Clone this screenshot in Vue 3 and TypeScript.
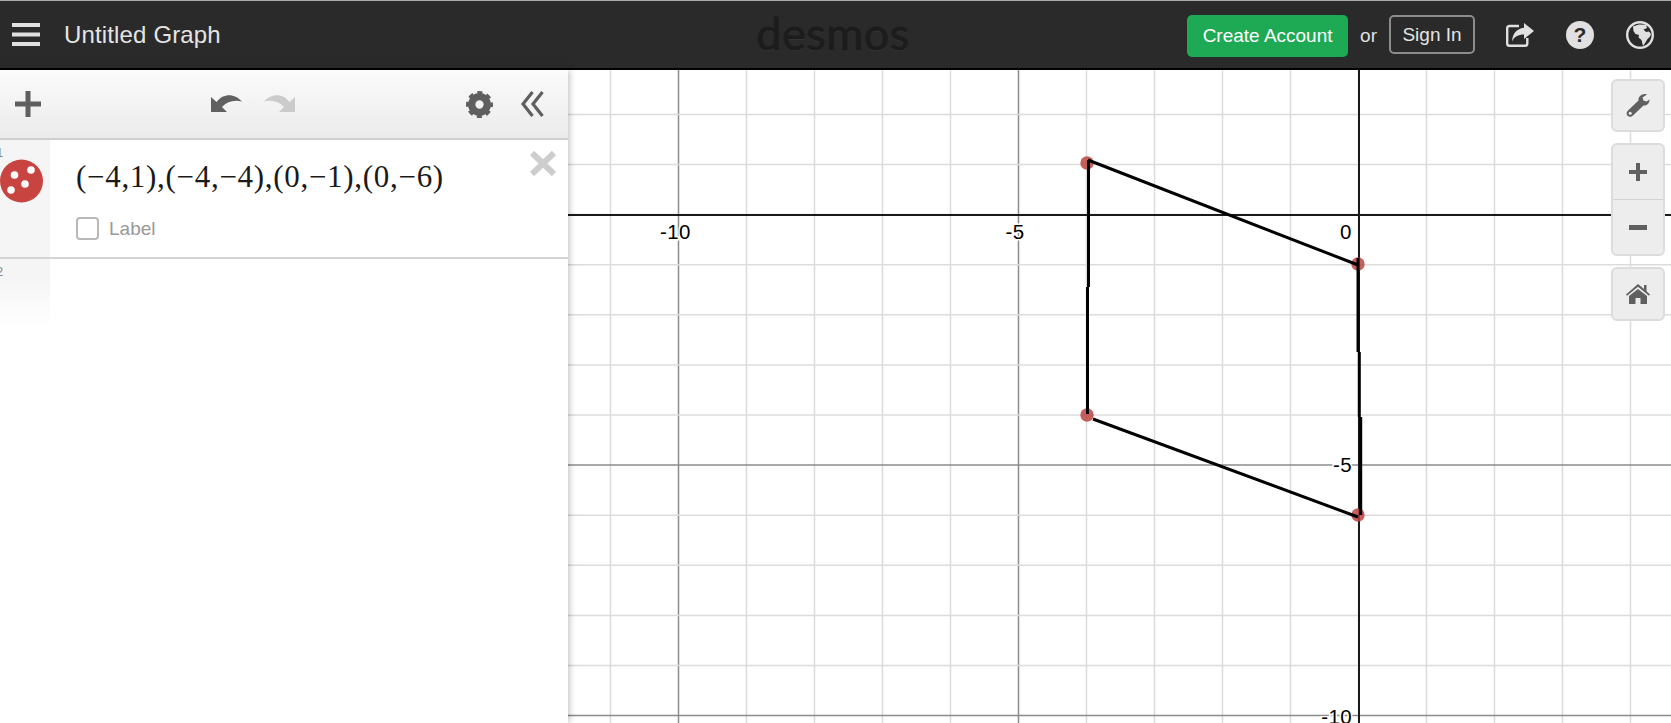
<script setup lang="ts">
const xs: number[] = [];
for (let x = 610.5; x < 1671; x += 68) xs.push(x);
const ys: number[] = [];
for (let k = -2; k <= 10; k++) ys.push(214.6 + 50.1 * k);
const majorX = new Set([678.5, 1018.5]);
const majorYIdx = new Set([7, 12]);
const xLabels = [
  { t: "-10", x: 675.5, y: 239 },
  { t: "-5", x: 1015, y: 239 },
  { t: "0", x: 1346, y: 239 },
];
const yLabels = [
  { t: "-5", x: 1352, y: 472 },
  { t: "-10", x: 1352, y: 724 },
];
const dots = [
  [1087, 163],
  [1358, 264],
  [1087, 415],
  [1358, 515],
];
</script>

<template>
  <div class="page">
    <header class="top">
      <div class="left">
        <svg class="burger" width="28" height="23" viewBox="0 0 28 23"><path d="M0 0h28v4H0zM0 9.500h28v4H0zM0 19h28v4H0z" fill="#e0e0e0"/></svg>
        <span class="title">Untitled Graph</span>
      </div>
      <div class="logo">desmos</div>
      <div class="right">
        <button class="create">Create Account</button>
        <span class="or">or</span>
        <button class="signin">Sign In</button>
        <svg class="share" width="28" height="24" viewBox="0 0 28 24">
          <path d="M13 3H3.500Q1.200 3 1.200 5.300V20.500Q1.200 22.800 3.500 22.800H19Q21.300 22.800 21.300 20.500V15" fill="none" stroke="#e0e0e0" stroke-width="2.400"/>
          <path d="M18 0L28 8L18 16V11.500C12 11.500 8.500 13.500 6 18.500C6.500 11 10.500 5.500 18 4.800Z" fill="#e0e0e0"/>
        </svg>
        <span class="help">?</span>
        <svg class="globe" width="28" height="28" viewBox="0 0 28 28">
          <circle cx="14" cy="14" r="12.800" fill="#2a2a2a" stroke="#e0e0e0" stroke-width="2.400"/>
          <path d="M7 5.500L13 3.500L20 3.800L21 7L17.500 8.500L20 11L23 10.500L25 13C24.500 15 23 17 21.500 18L18.500 23L17 25L15.500 19L12.500 16.500L13 14L9.500 13L7.500 10Z" fill="#e0e0e0"/>
        </svg>
      </div>
    </header>

    <main class="main">
      <aside class="panel">
        <div class="toolbar">
          <svg class="plus" width="26" height="26" viewBox="0 0 26 26"><path d="M10.500 0h5v10.500H26v5H15.500V26h-5V15.500H0v-5h10.500z" fill="#5f5f5f"/></svg>
          <div class="history">
            <svg width="32" height="20" viewBox="0 0 32 20"><path d="M1 4V19H17L12 14C17 8.500 24 6.500 32 8.500C25.500 1 14 -1 6.500 9Z" fill="#606060"/></svg>
            <svg width="32" height="20" viewBox="0 0 32 20"><path d="M31 4V19H15L20 14C15 8.500 8 6.500 0 8.500C6.500 1 18 -1 25.500 9Z" fill="#cbcbcb"/></svg>
          </div>
          <svg class="gear" width="27" height="27" viewBox="0 0 26 26">
            <circle cx="13" cy="13" r="7.500" fill="none" stroke="#5f5f5f" stroke-width="7"/>
            <circle cx="13" cy="13" r="11" fill="none" stroke="#5f5f5f" stroke-width="4" stroke-dasharray="4.640 4" stroke-dashoffset="2.320"/>
          </svg>
          <svg class="chev" width="23" height="26" viewBox="0 0 23 26"><path d="M11.500 1L2 13L11.500 25M21.500 1L12 13L21.500 25" fill="none" stroke="#5f5f5f" stroke-width="3.200"/></svg>
        </div>

        <div class="row first">
          <div class="gutter">
            <span class="num">1</span>
            <svg class="points" width="43" height="44" viewBox="0 0 43 44">
              <circle cx="21.500" cy="22" r="21.500" fill="#c74440"/>
              <circle cx="14.500" cy="16" r="3.800" fill="#fff"/>
              <circle cx="31" cy="11" r="3.800" fill="#fff"/>
              <circle cx="25" cy="25" r="3.800" fill="#fff"/>
              <circle cx="11" cy="31" r="3.800" fill="#fff"/>
            </svg>
          </div>
          <div class="body">
            <div class="math">(−4,1),(−4,−4),(0,−1),(0,−6)</div>
            <label class="lbl"><span class="box"></span><span>Label</span></label>
          </div>
          <svg class="close" width="28" height="27" viewBox="0 0 28 27"><path d="M3 3L25 24M25 3L3 24" stroke="#cdcdcd" stroke-width="6"/></svg>
        </div>

        <div class="row second">
          <div class="gutter fade"><span class="num">2</span></div>
        </div>
      </aside>

      <section class="graph">
        <svg class="plot" viewBox="568 70 1103 653" width="1103" height="653">
          <line v-for="x in xs" :key="'x' + x" :x1="x" :x2="x" y1="70" y2="723" :stroke="majorX.has(x) ? '#8c8c8c' : '#dcdcdc'" stroke-width="1.500"/>
          <line v-for="(y, i) in ys" :key="'y' + i" x1="568" x2="1671" :y1="y" :y2="y" :stroke="majorYIdx.has(i) ? '#8c8c8c' : '#dcdcdc'" stroke-width="1.500"/>
          <g shape-rendering="crispEdges">
            <line x1="1359" x2="1359" y1="70" y2="723" stroke="#1a1a1a" stroke-width="2"/>
            <line x1="568" x2="1671" y1="215" y2="215" stroke="#1a1a1a" stroke-width="2"/>
          </g>
          <text v-for="l in xLabels" :key="'lx' + l.t" :x="l.x" :y="l.y" class="tick" text-anchor="middle">{{ l.t }}</text>
          <text v-for="l in yLabels" :key="'ly' + l.t" :x="l.x" :y="l.y" class="tick" text-anchor="end">{{ l.t }}</text>
          <circle v-for="d in dots" :key="d[0] + '-' + d[1]" :cx="d[0]" :cy="d[1]" r="6.700" fill="#bc4440" fill-opacity="0.85"/>
          <g stroke="#000" stroke-width="3" fill="none">
            <path d="M1088 160L1358 265"/>
            <path d="M1093 419L1358 517"/>
            <path d="M1088.500 160V287M1087.500 287V414"/>
            <path d="M1358 258V352M1359.300 352V417M1360.700 417V515"/>
          </g>
        </svg>

        <div class="controls">
          <button class="ctl single wrench">
            <svg width="24" height="24" viewBox="0 0 24 24"><path d="M23.500 5.500C23.800 9 21 12 17.500 11.500L7 21.500C5.500 23 3 23.200 1.500 21.700C0 20.200 .5 18 2 16.500L12.500 6.500C12 3 15 0 19 0C20 0 20.800 .2 21 .5L16.500 3.500L17.500 6.500L20.500 7.500Z" fill="#606060" fill-rule="evenodd"/><circle cx="4.200" cy="19.300" r="1.500" fill="#ededed"/></svg>
          </button>
          <div class="ctl zoom">
            <button class="half"><svg width="18" height="18" viewBox="0 0 18 18"><path d="M7 0h4v7h7v4h-7v7H7v-7H0V7h7z" fill="#606060"/></svg></button>
            <button class="half lower"><svg width="18" height="5" viewBox="0 0 18 5"><path d="M0 0h18v5H0z" fill="#606060"/></svg></button>
          </div>
          <button class="ctl single">
            <svg width="24" height="20" viewBox="0 0 24 20"><path d="M12 0L18 5V1H20.500V7.200L24 10.500L23 11.800L12 2.800L1 11.800L0 10.500ZM12 5L21 12V20H14.500V14H9.500V20H3V12Z" fill="#606060"/></svg>
          </button>
        </div>
      </section>
    </main>
  </div>
</template>

<style>
html,
body {
  margin: 0;
  overflow: hidden;
  background: #fff;
}
</style>

<style scoped>
.page {
  width: 1671px;
  height: 723px;
  display: flex;
  flex-direction: column;
  font-family: "Liberation Sans", Arial, sans-serif;
  overflow: hidden;
}
button {
  font-family: inherit;
  padding: 0;
  cursor: pointer;
}
.top {
  height: 70px;
  box-sizing: border-box;
  background: #2a2a2a;
  border-top: 1px solid #aaa;
  border-bottom: 2px solid #000;
  display: grid;
  grid-template-columns: 1fr auto 1fr;
  align-items: center;
  padding-left: 12px;
  padding-right: 17px;
  flex: none;
}
.left {
  display: flex;
  align-items: center;
  gap: 24px;
  color: #e4e4e4;
}
.title {
  font-size: 24px;
  letter-spacing: 0.15px;
}
.logo {
  color: #1c1c1c;
  font-family: Lato, "Noto Sans", sans-serif;
  font-size: 45px;
  letter-spacing: 0.5px;
  line-height: 1;
  margin-top: -2px;
  -webkit-text-stroke: 0.9px #1c1c1c;
  text-shadow: 0 1px 0 #3c3c3c;
}
.right {
  display: flex;
  align-items: flex-start;
  justify-content: flex-end;
  align-self: start;
  margin-top: 14px;
}
.create {
  width: 161px;
  height: 42px;
  background: #1eaa55;
  border: 0;
  border-radius: 5px;
  color: #fff;
  font-size: 19px;
}
.or {
  color: #e0e0e0;
  font-size: 19px;
  line-height: 42px;
  margin: 0 12px;
}
.signin {
  width: 86px;
  height: 39px;
  box-sizing: border-box;
  background: transparent;
  border: 2px solid #8c8c8c;
  border-radius: 5px;
  color: #e4e4e4;
  font-size: 19px;
}
.share {
  margin: 8px 0 0 31px;
}
.help {
  width: 28px;
  height: 28px;
  border-radius: 50%;
  background: #e0e0e0;
  color: #2a2a2a;
  font-weight: 700;
  font-size: 21px;
  line-height: 28px;
  text-align: center;
  margin: 6px 0 0 32px;
}
.globe {
  margin: 6px 0 0 32px;
}
.main {
  flex: 1;
  min-height: 0;
  display: flex;
}
.panel {
  width: 568px;
  flex: none;
  background: #fff;
  box-shadow: 1px 0 7px rgba(0, 0, 0, 0.28);
  position: relative;
  z-index: 2;
}
.toolbar {
  height: 70px;
  box-sizing: border-box;
  background: linear-gradient(#fbfbfb, #ebebeb);
  border-bottom: 2px solid #cfcfcf;
  display: flex;
  align-items: center;
  padding: 0 24px 0 15px;
}
.history {
  display: flex;
  gap: 22px;
  margin-left: 169px;
  margin-top: -3px;
}
.gear {
  margin-left: auto;
}
.chev {
  margin-left: 28px;
}
.row {
  display: flex;
  position: relative;
}
.first {
  height: 119px;
  box-sizing: border-box;
  border-bottom: 2px solid #d4d4d4;
}
.second {
  height: 68px;
}
.gutter {
  width: 50px;
  flex: none;
  background: #f5f5f5;
  position: relative;
}
.fade {
  background: linear-gradient(#f5f5f5 30%, #ffffff);
}
.num {
  position: absolute;
  left: -4px;
  top: 5px;
  font-size: 13px;
  color: #888;
}
.points {
  position: absolute;
  left: 0;
  top: 19px;
}
.body {
  padding: 17px 0 0 26px;
  flex: 1;
}
.math {
  font-family: "Liberation Serif", "Times New Roman", serif;
  font-size: 31px;
  letter-spacing: 0.7px;
  line-height: 40px;
  color: #1a1a1a;
  white-space: nowrap;
}
.lbl {
  display: flex;
  align-items: center;
  gap: 10px;
  margin-top: 20px;
  font-size: 19px;
  color: #999;
}
.box {
  width: 23px;
  height: 23px;
  box-sizing: border-box;
  border: 2px solid #b9b9b9;
  border-radius: 4px;
  background: #fff;
}
.close {
  position: absolute;
  left: 529px;
  top: 10px;
}
.graph {
  flex: 1;
  position: relative;
  overflow: hidden;
}
.plot {
  display: block;
}
.tick {
  font-family: "Liberation Sans", Arial, sans-serif;
  font-size: 20.5px;
  letter-spacing: 0.4px;
  fill: #000;
  stroke: #fff;
  stroke-width: 3px;
  paint-order: stroke;
}
.controls {
  position: absolute;
  top: 9px;
  right: 6px;
  width: 54px;
  display: flex;
  flex-direction: column;
  gap: 11px;
}
.ctl {
  box-sizing: border-box;
  width: 54px;
  background: #ededed;
  border: 2px solid #dcdcdc;
  border-radius: 6px;
}
.single {
  height: 54px;
  display: flex;
  align-items: center;
  justify-content: center;
}
.wrench {
  height: 53px;
}
.zoom {
  height: 113px;
  display: flex;
  flex-direction: column;
}
.half {
  flex: 1;
  background: none;
  border: 0;
  display: flex;
  align-items: center;
  justify-content: center;
}
.lower {
  border-top: 1px solid #d2d2d2;
}
</style>
